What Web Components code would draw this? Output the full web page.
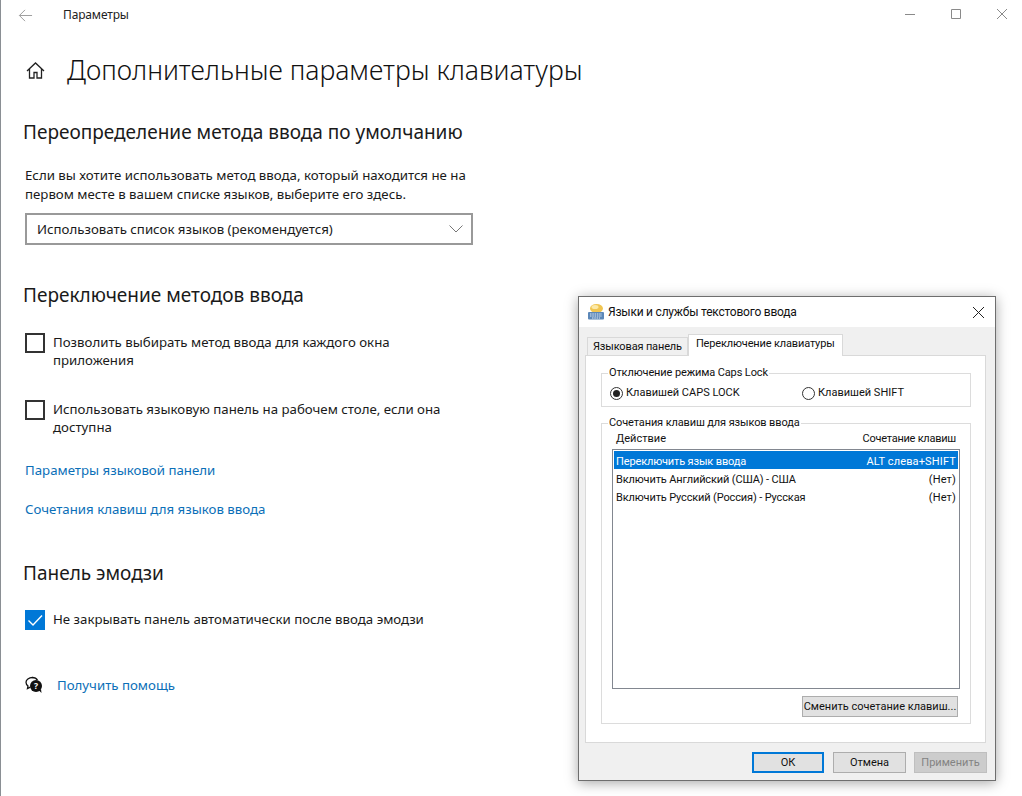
<!DOCTYPE html>
<html lang="ru"><head><meta charset="utf-8"><title>Параметры</title>
<style>
html,body{margin:0;padding:0;background:#fff;height:796px;overflow:hidden;font-family:"Noto Sans","Open Sans",sans-serif;color:#1a1a1a}
</style></head><body>
<settings-page>
  <win-titlebar>Параметры</win-titlebar>
  <page-heading>Дополнительные параметры клавиатуры</page-heading>
  <section-title style="--top:29px">Переопределение метода ввода по умолчанию</section-title>
  <para-text>Если вы хотите использовать метод ввода, который находится не на первом месте в вашем списке языков, выберите его здесь.</para-text>
  <combo-box>Использовать список языков (рекомендуется)</combo-box>
  <section-title style="--top:37px">Переключение методов ввода</section-title>
  <check-row style="--top:25px">Позволить выбирать метод ввода для каждого окна приложения</check-row>
  <check-row style="--top:31px">Использовать языковую панель на рабочем столе, если она доступна</check-row>
  <link-row style="--top:24px">Параметры языковой панели</link-row>
  <link-row style="--top:19px">Сочетания клавиш для языков ввода</link-row>
  <section-title style="--top:41px">Панель эмодзи</section-title>
  <check-row style="--top:24px" checked>Не закрывать панель автоматически после ввода эмодзи</check-row>
  <help-row>Получить помощь</help-row>
</settings-page>
<ime-dialog></ime-dialog>
<script>
function def(name,html){
  customElements.define(name,class extends HTMLElement{
    connectedCallback(){
      if(this.shadowRoot)return;
      const r=this.attachShadow({mode:'open'});
      r.innerHTML=typeof html==='function'?html(this):html;
    }
  });
}
const FONT='"Noto Sans","Open Sans",sans-serif';
def('settings-page',`<style>:host{display:block;margin-left:1px;height:796px;box-shadow:-1px 0 0 #8a8f94}
</style><slot></slot>`);
def('win-titlebar',`<style>
:host{display:flex;align-items:center;height:30px;font:12px/16px ${FONT};letter-spacing:-.15px;color:#222}
.back{margin-left:17px;width:15px;height:15px;margin-right:30px;flex:none}
.sp{flex:1}
.c{display:flex;align-items:center;margin-right:14px;gap:34px;margin-top:-3px}
svg{display:block}
</style>
<svg class="back" viewBox="0 0 16 16" fill="none" stroke="#9a9a9a" stroke-width="1"><path d="M15 8H1.500M7.500 2L1.500 8l6 6"/></svg>
<span><slot></slot></span><span class="sp"></span>
<div class="c">
<svg width="12" height="12" viewBox="0 0 12 12" fill="none" stroke="#8a8a8a"><path d="M1 6.500h10"/></svg>
<svg width="12" height="12" viewBox="0 0 12 12" fill="none" stroke="#8a8a8a"><path d="M1.500 1.500h9v9h-9z"/></svg>
<svg width="12" height="12" viewBox="0 0 12 12" fill="none" stroke="#8a8a8a"><path d="M1 1l10 10M11 1L1 11"/></svg>
</div>`);
def('page-heading',`<style>
:host{display:flex;align-items:center;margin-top:20px;height:40px;padding-left:25px;font:300 26.600px/40px ${FONT};color:#111}
svg{width:19px;height:19px;margin-right:22px;flex:none}
</style>
<svg viewBox="0 0 19 19" fill="none" stroke="#222" stroke-width="1.300"><path d="M1 10L9.500 2 18 10M3.500 8v9h4.500v-5.500h3V17h4.500V8"/></svg><span><slot></slot></span>`);
def('section-title',`<style>
:host{display:block;margin-top:var(--top,30px);margin-left:22px;font:400 19px/26px ${FONT};color:#1a1a1a}
</style><slot></slot>`);
def('para-text',`<style>
:host{display:block;margin:21px 0 0 24px;width:450px;font:400 13.250px/19px ${FONT};color:#1a1a1a}
</style><slot></slot>`);
def('combo-box',`<style>
:host{display:flex;align-items:center;box-sizing:border-box;margin:9px 0 0 24px;width:448px;height:32px;border:2px solid #999;padding:0 8px 0 10px;font:400 13.250px/18px ${FONT};color:#1a1a1a}
span{flex:1}
</style><span><slot></slot></span>
<svg width="14" height="8" viewBox="0 0 14 8" fill="none" stroke="#777"><path d="M.5 .5L7 7l6.500-6.500"/></svg>`);
def('check-row',h=>`<style>
:host{display:flex;align-items:flex-start;margin:var(--top,14px) 0 0 24px;width:420px;font:400 13.250px/18px ${FONT};color:#1a1a1a}
.b{box-sizing:border-box;width:20px;height:20px;flex:none;margin-right:8px;border:2px solid #333;display:block}
.on{background:#0078d7;border:0}
</style>${h.hasAttribute('checked')
?`<svg class="b on" viewBox="0 0 20 20" fill="none" stroke="#fff" stroke-width="1.400"><path d="M3.500 10.500l4.500 4.500L17 5.500"/></svg>`
:`<div class="b"></div>`}<span><slot></slot></span>`);
def('link-row',`<style>
:host{display:block;margin:var(--top,20px) 0 0 24px;font:400 13.250px/20px ${FONT};color:#0b6fb8}
</style><slot></slot>`);
def('help-row',`<style>
:host{display:flex;align-items:center;margin:45px 0 0 24px;height:20px;font:400 13.250px/20px ${FONT};color:#0b6fb8}
svg{width:18px;height:18px;margin-right:14px;flex:none}
</style>
<svg viewBox="0 0 18 18"><path d="M7.500 1.500C3.800 1.500 1 3.700 1 6.300c0 1.500.8 2.800 2 3.700L2.500 12.500l2.800-1.400" fill="none" stroke="#111" stroke-width="1.300"/><path d="M7 1.500c2.500 0 4.600 1 5.500 2.800" fill="none" stroke="#111" stroke-width="1.300"/><circle cx="11" cy="10" r="6" fill="#111"/><path d="M14 14.500l2.500 2.500-.5-4z" fill="#111"/><text x="11" y="13" text-anchor="middle" font-size="8.500" font-weight="700" fill="#fff" font-family="Noto Sans">?</text></svg>
<span><slot></slot></span>`);

/* dialog */
const DFF='Roboto,"Noto Sans",sans-serif';
const DF='11px/16px '+DFF;
def('win-button',`<style>
:host{display:flex;align-items:center;justify-content:center;box-sizing:border-box;height:21px;background:#e1e1e1;border:1px solid #adadad;font:${DF};color:#111;white-space:nowrap}
:host([primary]){border:2px solid #0078d7}
:host([disabled]){background:#ccc;border-color:#bfbfbf;color:#838383}
</style><slot></slot>`);
def('group-box',h=>`<style>
:host{display:block}
fieldset{margin:0;padding:0;border:1px solid #dcdcdc;box-sizing:border-box;height:100%;min-width:0}
legend{margin-left:6px;padding:0 1px;font:${DF};letter-spacing:-.12px;color:#111}
</style><fieldset><legend>${h.getAttribute('label')}</legend><slot></slot></fieldset>`);
def('radio-opt',h=>`<style>
:host{display:flex;align-items:center;font:${DF};color:#111}
i{box-sizing:border-box;width:13px;height:13px;border:1px solid #333;border-radius:50%;margin-right:3px;display:flex;align-items:center;justify-content:center}
b{width:7px;height:7px;border-radius:50%;background:#222}
</style><i>${h.hasAttribute('checked')?'<b></b>':''}</i><slot></slot>`);
def('hotkey-row',h=>`<style>
:host{display:flex;justify-content:space-between;height:18px;padding:0 2px;font:11px/22px ${DFF};letter-spacing:-.14px;color:#111}
:host([selected]){background:#0078d7;color:#fff}
.k{letter-spacing:.15px}
</style><span><slot></slot></span><span class="k">${h.getAttribute('keys')}</span>`);
def('ime-dialog',`<style>
:host{position:absolute;left:578px;top:296px;width:418px;height:485px;box-sizing:border-box;border:1px solid #6e6e6e;background:#f0f0f0;box-shadow:0 2px 12px rgba(0,0,0,.35);display:flex;flex-direction:column;font:${DF};color:#111}
.title{height:30px;background:#fff;display:flex;align-items:center;padding:0 10px 0 8px;flex:none;font-size:12px;letter-spacing:-.22px}
.title svg.k{margin-right:3px}
.title span{flex:1}
.tabs{display:flex;align-items:flex-end;margin:7px 0 0 8px;height:21px;flex:none;position:relative;z-index:1;letter-spacing:-.15px}
.tab{box-sizing:border-box;border:1px solid #d9d9d9;border-bottom:0;padding:0 5px;height:18px;line-height:17px;background:#f0f0f0}
.tab.on{background:#fff;padding:0 7px;line-height:18px;margin-bottom:-1px;height:22px}
.panel{box-sizing:border-box;margin:0 9px 0 6px;height:388px;background:#fff;border:1px solid #d9d9d9;padding:9px 14px 0 15px;flex:none}
.g1{height:42px}
.r{display:flex;padding-left:8px;margin-top:4px}
.r radio-opt:first-child{width:192px}
.g2{height:309px;margin-top:8px}
.hd{display:flex;justify-content:space-between;padding:0 14px;margin-top:-1px;height:18px;line-height:18px}
.hd span:last-child{letter-spacing:-.25px}
.list{box-sizing:border-box;margin:1px 10px 0;height:240px;border:1px solid #828790;padding:1px}
.act{display:flex;justify-content:flex-end;margin:7px 12px 0 0}
.act win-button{width:156px}
.foot{display:flex;justify-content:flex-end;gap:8px;padding:9px 8px 0 0}
.foot win-button{width:73px}
.foot win-button[primary]{margin-right:1px;width:72px}
</style>
<div class="title">
<svg class="k" width="18" height="18" viewBox="0 0 18 18"><ellipse cx="9.500" cy="5.500" rx="6.500" ry="4.500" fill="#f0c552"/><ellipse cx="8" cy="4" rx="3.500" ry="2" fill="#fbe9a8"/><rect x="1" y="9" width="16" height="7.500" rx="1" fill="#5b87b8"/><path d="M3 11h12M3 13h12M5 15h8" stroke="#dfe9f4" stroke-width="1" stroke-dasharray="1.500 .8"/></svg>
<span>Языки и службы текстового ввода</span>
<svg width="13" height="13" viewBox="0 0 13 13" fill="none" stroke="#222"><path d="M1 1l11 11M12 1L1 12"/></svg>
</div>
<div class="tabs"><div class="tab">Языковая панель</div><div class="tab on">Переключение клавиатуры</div></div>
<div class="panel">
  <group-box class="g1" label="Отключение режима Caps Lock">
    <div class="r"><radio-opt checked>Клавишей CAPS LOCK</radio-opt><radio-opt>Клавишей SHIFT</radio-opt></div>
  </group-box>
  <group-box class="g2" label="Сочетания клавиш для языков ввода">
    <div class="hd"><span>Действие</span><span>Сочетание клавиш</span></div>
    <div class="list">
      <hotkey-row selected keys="ALT слева+SHIFT">Переключить язык ввода</hotkey-row>
      <hotkey-row keys="(Нет)">Включить Английский (США) - США</hotkey-row>
      <hotkey-row keys="(Нет)">Включить Русский (Россия) - Русская</hotkey-row>
    </div>
    <div class="act"><win-button>Сменить сочетание клавиш...</win-button></div>
  </group-box>
</div>
<div class="foot"><win-button primary>ОК</win-button><win-button>Отмена</win-button><win-button disabled>Применить</win-button></div>`);
</script>
</body></html>
